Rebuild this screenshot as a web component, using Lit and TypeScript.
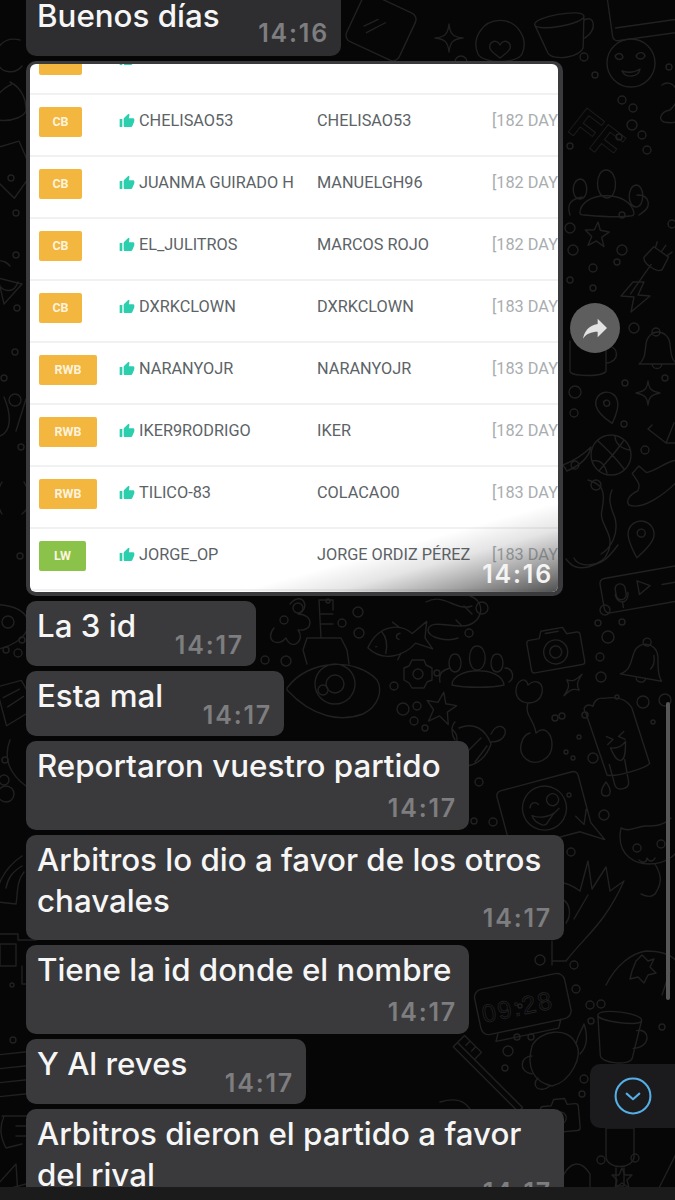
import { LitElement, html, css, svg } from 'lit';
import { customElement } from 'lit/decorators.js';

// wallpaper doodles: [x, y, rotation, path in local coords]
const DOODLES: [number, number, number, string][] = [
  // top right
  [382, 30, 25, 'M-24-28h44a7 7 0 0 1 7 7v38a7 7 0 0 1-7 7h-44a7 7 0 0 1-7-7v-38a7 7 0 0 1 7-7zM-8-8l-10 12M0-8l-13 17'],
  [449, 38, 0, 'M0-14C1-4 4-1 14 0 4 1 1 4 0 14-1 4-4 1-14 0-4-1-1-4 0-14z'],
  [500, 46, 0, 'M-22 8a24 24 0 1 1 44 0c-5 10-39 10-44 0zM0 12c-8-6-13-10-9-15 3-3 7-2 9 2 2-4 6-5 9-2 4 5-1 9-9 15z'],
  [562, 30, -10, 'M-26-10c0-8 50-8 50 0L18 20c-2 10-32 10-36 0zM-26-10c0 8 50 8 50 0M24-6c10-4 12 12-3 18'],
  [650, 15, -8, 'M-40-25V16a5 5 0 0 0 5 5h75M-36 8H40'],
  [631, 63, 0, 'M24 0A24 24 0 1 1-24 0 24 24 0 0 1 24 0zM-16-7c3-4 7-3 8 1-1 3-6 4-8-1zM5-7c3-5 8-4 9 0-2 4-7 4-9 0zM-9 8c6 2 12 2 18-2-1 8-14 10-18 2z'],
  [672, 105, 0, 'M-10-20c10-8 25 10 8 25-10 2-12 10-6 12 8 2 20 0 20-8'],
  // people group next to the table
  [606, 195, 0, 'M-26 18c0-22 50-24 54 0 0 2-2 3-4 3-14 2-34 0-46-1-2 0-4 0-4-2zM0-25c-11 0-12 27 1 28 12-1 11-28-1-28zM-26-16c-9 1-9 20 0 20 9 0 9-20 0-20zM30-10c-9 1-9 22 0 22 9 0 9-22 0-22zM-36 20c-4-12 2-16 12-18M33 20c6-4 12-8 8-16-3-4-6-4-10-4'],
  [597, 234, 5, 'M0-12L3-4 12-3 5 3 8 12 0 7-8 12-5 3-12-3-3-4z'],
  [652, 265, 35, 'M-9-16h18l2 14c-2 6-20 6-22 0zM-1 0V36M-7-16l-2-6M0-16v-8M7-16l2-6'],
  [636, 296, 0, 'M-3-14L-15 0-2 1-5 16 14 0 2-1 8-14z'],
  [657, 350, 0, 'M-18 14c6-4 6-12 7-20 2-16 22-16 24 0 1 8 1 16 7 20zM-1-14a4 4 0 1 1 0-8 4 4 0 0 1 0 8zM-5 14c1 6 9 6 10 0'],
  [590, 355, 0, 'M-20-14V16c0 6 34 6 36 0V-14M16-8c14-3 14 16 0 16'],
  [648, 393, 0, 'M0-12C1-4 3-2 12 0 3 2 1 4 0 12-1 4-3 2-12 0-3-2-1-4 0-12z'],
  // pin, basketball, tick and sneaker below the forward button
  [608, 408, -15, 'M0 16C-7 8-11 0-11-5a11 11 0 1 1 22 0c0 5-4 13-11 21zM0-8a3 3 0 1 1 0 6 3 3 0 0 1 0-6z'],
  [611, 455, 0, 'M-20 0A20 20 0 1 1 20 0 20 20 0 0 1-20 0zM-13-14C-4-6 4 2 13 14M13-15C6-4-4 6-12 16M-19 6C-10 4-6 10-4 18M4-19C4-12 10-6 19-5'],
  [660, 435, 0, 'M-12-6L6 8 14-12M-12-6L-8-10M6 8L16 8'],
  [650, 480, -12, 'M-16-10L-8-16-2-8C8-8 18-14 28-14M-16-10C-12 0-10 2-14 8-22 10-28 14-26 20-14 28 10 18 28 6'],
  [577, 455, 0, 'M-14 10C-4 6 6 0 14-8 12 2 4 10-10 16zM-6 10a4 4 0 1 1 0 .1'],
  // octopus arm and pin
  [598, 535, 0, 'M-10-55c14 4 18 10 14 30-4 14 14 24 6 42-6 16-30 16-34 6M14-45c-4 8-2 16 3 28 4 16-4 30-14 36M-32 24c6 8 12 10 22 8 14-4 18-6 30-22'],
  [640, 540, 10, 'M0 18C-8 8-13 0-13-6a13 13 0 1 1 26 0c0 6-5 14-13 24zM0-11a4 4 0 1 1 0 8 4 4 0 0 1 0-8z'],
  [642, 586, -10, 'M-36-14H36a5 5 0 0 1 5 5V16a5 5 0 0 1-5 5H-36a5 5 0 0 1-5-5V-9a5 5 0 0 1 5-5zM-22-6a5 5 0 0 1 5 5v6a5 5 0 0 1-10 0v-6a5 5 0 0 1 5-5zM-28 4c1 11 12 11 13 0M-22 12v6M-4-6L8 1-4 8zM20 2H34'],
  // middle band
  [395, 640, -8, 'M-28 4C-14-18 8-16 18-4L34-14 30 2 36 14 20 6C6 18-16 20-28 4zM-12-10c4 6 4 14 1 22M6-6c-4 0-6 4-2 6M-20 4h1M0-18L6-12M4 14L0 20'],
  [450, 620, 0, 'M-24-18C-6-28 6-8 22-14M20-24c18 6 12 30-8 30-16 0-32-6-34 4 0 8 20 12 30 8M14-14l8 8M6 0l6 6'],
  [476, 660, 0, 'M-24 25c0-18 50-20 52 0-12 3-40 3-52 0zM1-14c-10 0-10 24 0 24 11 0 11-24 0-24zM-21-6c-8 0-8 18 0 18 8 0 8-18 0-18zM21-6c-8 0-8 18 0 18 8 0 8-18 0-18zM-36 22c-2-10 4-12 10-14M33 22c6-4 4-14-4-14'],
  [418, 674, 0, 'M-6-14H6L8-9 14-6 14 6 9 8 6 14H-6L-9 9-14 6V-6L-9-8zM5 0A5 5 0 1 1-5 0 5 5 0 0 1 5 0z'],
  [441, 708, 10, 'M0-16L4-5 15-5 7 3 10 15 0 8-10 15-7 3-15-5-4-5z'],
  [555, 648, -10, 'M-24-12h10l3-7h22l3 7H24a3 3 0 0 1 3 3V18a3 3 0 0 1-3 3H-24a3 3 0 0 1-3-3V-9a3 3 0 0 1 3-3zM12 4A12 12 0 1 1-12 4 12 12 0 0 1 12 4zM6 4A6 6 0 1 1-6 4 6 6 0 0 1 6 4zM-7-16H6'],
  [645, 660, 10, 'M-22 18c10-6 8-14 10-24 2-12 20-14 24 0 2 8 2 18 8 24zM-1-14a4 4 0 1 1 0-8 4 4 0 0 1 0 8zM-6 18c1 6 9 6 10 0M8-6c2 6 2 10-1 14'],
  [573, 685, 40, 'M0-14C1-4 3-2 8 0 3 2 1 4 0 14-1 4-3 2-8 0-3-2-1-4 0-14z'],
  // submarine
  [333, 690, 0, 'M-46-2C-24-32 24-32 44-10c6 10 2 26-14 34-22 8-50 4-76-24zM-26-26l-4-14 4-12h34l6 12 2 14M-12-52L-14-90H0V-80M-12-76H0M-12-66H0M22-6A20 20 0 1 1-18-6 20 20 0 0 1 22-6zM11-6A9 9 0 1 1-7-6 9 9 0 0 1 11-6z'],
  [270, 620, 0, 'M20-16c12-14 22 4 8 10 16 0 16 18 0 16 8 10-6 22-12 8-8 10-22 2-12-10M14-4a4 4 0 1 1 0 8 4 4 0 0 1 0-8z'],
  [532, 725, 0, 'M-4-40c-2-10-12-4-12 6 0 8 6 12 14 12M-4-40c6-6 16-4 14 8-2 8-8 10-14 10M-4-22C-8-10 2-6 4 8M4 8c8-8 16 0 16 12 0 14-16 22-26 14-10-8-4-24 4-26'],
  [616, 745, -10, 'M-24-36c-4-8 4-10 8-6 2-6 8-8 12-6 14 0 22 4 26 14l8 58c-4 4-36 8-44 4zM-10 18L-8 40c2 6 14 6 14-2L6 16M-8-10L-2-6-8-2M10-12L4-8 10-4M-6 2c8 2 12 0 16-4-2 12-4 18-8 18-4 0-6-6-8-14z'],
  [475, 750, 0, 'M-16-22c14-6 26 0 32 16M16-6c-4 12-14 22-26 22-10 0-16-8-10-18 2-6 4-12-2-18M-10 4L6-12M0 12L12-4M16-16c6-12 16-8 14 0-2 6-8 8-14 8M-20-10c-4-6-4-14 0-18'],
  // wink chat bubble
  [545, 810, -15, 'M-38-30H36a5 5 0 0 1 5 5V24L50 44 28 30H-38a5 5 0 0 1-5-5V-25a5 5 0 0 1 5-5zM22-2A22 22 0 1 1-22-2 22 22 0 0 1 22-2zM4-8a6 6 0 1 1 12 0 6 6 0 0 1-12 0zM-14-6c2-5 7-5 9-1M-14 2C-6 8 6 8 14 2-2 10 0 16-6 14-12 10-14 6-14 2zM28 14L34 24M34 24L40 10'],
  [606, 790, 0, 'M0-8C-6 0-6 6 0 6 5 6 6 0 0-8z'],
  [645, 850, 0, 'M-24-22C-16-18-12-22 0-24 10-24 18-24 26-32M-24-22C-30 8-6 14 4 14 20 14 32 6 36-6M-8-6a4 4 0 1 1 0 8 4 4 0 0 1 0-8zM16-10a4 4 0 1 1 0 8 4 4 0 0 1 0-8zM-6 10c4 4 8 2 8-2 2 4 6 4 8 0M10 14c6 10 8 18 0 30-4 4-10 2-14 0'],
  // hand
  [596, 905, 0, 'M-44 56H-30C-10 30 8 20 28-24L14-14 10-38-4-16-8-44-16-14C-30-24-40-24-46-18M-8-10L-22 14M-34-6c8 4 10 16 4 24M-44 36V60'],
  [640, 945, 0, 'M-34 40C-24 20-8 8 6 6c20 0 30 6 34 16M-4 16l6-6 6 6 6-2-4 8 6 6-8 2-4 8-6-6-8 2 2-8zM30 26l-8 24'],
  // clock, 09:28
  [523, 1005, -12, 'M-38-24H38a8 8 0 0 1 8 8V14a8 8 0 0 1-8 8H-38a8 8 0 0 1-8-8V-16a8 8 0 0 1 8-8zM-30 22l-4 8H30l4-8'],
  [618, 1037, 5, 'M-22-20c0-8 46-6 44 2L16 20c-2 8-30 8-32 0zM-22-20c0 6 42 8 44 2M18-8c14-4 16 16-2 18'],
  [552, 1060, 0, 'M-20-14C-12-30 16-34 24-16 32-4 18 22 0 26-18 22-26 8-20-14zM24-16C26-26 30-30 32-36 36-24 36-14 28-6M-20-4C-32-4-34 12-20 14M-14 18C-22 26-12 34 -2 26'],
  [490, 1075, 45, 'M-46 0H46V6H-46zM-46 0V-10H-22V0M-38-10V-4M-30-10V-4'],
  [560, 1115, -5, 'M-16-10H-8L-5-16H6L8-10H16a3 3 0 0 1 3 3V14a3 3 0 0 1-3 3H-16a3 3 0 0 1-3-3V-7a3 3 0 0 1 3-3zM6 3A6 6 0 1 1-6 3 6 6 0 0 1 6 3z'],
  [620, 1150, 0, 'M-14-22H14V6C14 20-14 20-14 6zM-4 18V36H4V18'],
  [622, 1178, 0, 'M0-10L3-3 10-3 5 2 7 10 0 5-7 10-5 2-10-3-3-3z'],
  [670, 1170, 0, 'M-14 24L8-20M8-20V24M-14 24H8'],
  [590, 1180, 0, 'M-32 10C-24-20-10-22 0-6V10'],
  [470, 1110, 0, 'M-30-8c20-6 34 0 36 30V30'],
  // left strip
  [12, 70, 0, 'M8-30C-8-34-20-22-14-6-10 4 4 4 10-4M-2 12C10 18 14 30 14 38 16 46 0 52-14 50M0 14C-8 18-14 24-16 28'],
  [8, 175, -20, 'M-10-30L22-28 24 6-2 24-20-14z'],
  [8, 290, 0, 'M-14-12C-6 4 6 4 10-8M-10-12L14-6-4 14zM-14-26C-6-34 2-24 2-24'],
  [2, 415, 0, 'M-12 22c20 2 24-16 14-40M24-16L14 16'],
  [12, 500, 0, 'M-10 -18C-16-8-16 4-10 14M12-18C20-4 20 6 10 14'],
  [6, 628, 0, 'M-26-20C-4-28 20-20 22-6 24 8 4 24-26 22'],
  [10, 700, -15, 'M-10-16H16L24 14-10 24zM-6-4L12-8M-4 6L14 0'],
  [8, 780, 0, 'M2-40C-6-20 4-4 18 6M-10 14a8 8 0 1 1 16 0 8 8 0 0 1-16 0z'],
  [8, 880, 0, 'M-10 22C-14 8-4-12 14-24M-10 22L8 24C10 14 8 2 16-8M-2 8C0-2 4-8 14-14'],
  [10, 960, 0, 'M-10-16V6H6V-16zM-16-26H8V-20H26M12 6V24H26'],
  [10, 1075, 0, 'M-14-20L24-24M-14-6L24-10M-14 8L24 4M-14 22L24 18'],
  [12, 1130, 0, 'M-10-14H24M-8-14C-14 0-10 10-6 18L10 14M4-4H22M4 6H22'],
  [8, 1176, 0, 'M-10 8L8-12 10 20M-4 14L18 8'],
];

// little bubbles scattered between the doodles
const DOTS: [number, number, number][] = [
  [461, 62, 6], [584, 57, 4], [595, 75, 3], [669, 67, 3], [622, 100, 4], [633, 108, 4], [632, 125, 5],
  [619, 137, 3], [642, 135, 4], [647, 150, 4], [570, 146, 3], [570, 228, 5], [573, 250, 5], [622, 215, 3],
  [570, 280, 3], [622, 250, 5], [617, 262, 3], [593, 268, 4], [593, 288, 3], [634, 328, 5], [672, 224, 4],
  [625, 383, 3], [665, 378, 3], [575, 392, 6], [574, 413, 4], [624, 424, 3], [645, 450, 4], [596, 485, 5],
  [605, 610, 5], [598, 623, 3], [608, 637, 6], [622, 622, 3], [600, 657, 4], [601, 677, 5], [617, 697, 2],
  [643, 702, 6], [665, 700, 6], [653, 722, 2], [562, 716, 3], [585, 715, 3], [579, 737, 2], [566, 752, 2],
  [573, 758, 2], [593, 758, 5], [569, 795, 2], [555, 718, 3], [482, 608, 6], [469, 633, 4], [298, 608, 5],
  [328, 601, 2], [358, 612, 5], [342, 623, 4], [359, 633, 5], [437, 673, 3], [394, 686, 4], [403, 709, 6],
  [417, 706, 4], [414, 721, 4], [323, 690, 5], [265, 660, 4], [286, 661, 5], [425, 728, 3], [479, 782, 4],
  [493, 822, 4], [474, 821, 3], [604, 815, 5], [571, 852, 4], [540, 960, 5], [520, 1006, 2], [574, 965, 4],
  [576, 989, 4], [601, 1004, 4], [590, 1005, 4], [591, 1021, 3], [662, 1027, 3], [517, 1037, 3], [531, 1037, 3],
  [508, 1051, 5], [505, 1068, 3], [584, 1079, 4], [582, 1094, 3], [521, 1130, 3], [635, 1158, 4], [601, 1160, 4],
  [11, 178, 3], [16, 213, 3], [16, 255, 3], [17, 308, 3], [15, 352, 3], [4, 378, 3], [15, 400, 6], [21, 447, 3],
  [20, 556, 3], [8, 622, 6], [22, 640, 3], [6, 650, 3], [18, 653, 4], [5, 760, 3], [4, 780, 5], [12, 985, 2],
  [13, 1040, 3],
];

type Msg = { text: string; time: string; width: number; kind: 'inline' | 'stack' | 'wrap' };

const BEFORE: Msg[] = [{ text: 'Buenos días', time: '14:16', width: 315, kind: 'inline' }];

const AFTER: Msg[] = [
  { text: 'La 3 id', time: '14:17', width: 230, kind: 'inline' },
  { text: 'Esta mal', time: '14:17', width: 258, kind: 'inline' },
  { text: 'Reportaron vuestro partido', time: '14:17', width: 443, kind: 'stack' },
  { text: 'Arbitros lo dio a favor de los otros chavales', time: '14:17', width: 538, kind: 'wrap' },
  { text: 'Tiene la id donde el nombre', time: '14:17', width: 443, kind: 'stack' },
  { text: 'Y Al reves', time: '14:17', width: 280, kind: 'inline' },
  { text: 'Arbitros dieron el partido a favor del rival', time: '14:17', width: 538, kind: 'wrap' },
];

const ROWS = [
  { pos: 'CB', w: 43, user: 'CHELISAO53', name: 'CHELISAO53', days: '[182 DAYS]' },
  { pos: 'CB', w: 43, user: 'JUANMA GUIRADO H', name: 'MANUELGH96', days: '[182 DAYS]' },
  { pos: 'CB', w: 43, user: 'EL_JULITROS', name: 'MARCOS ROJO', days: '[182 DAYS]' },
  { pos: 'CB', w: 43, user: 'DXRKCLOWN', name: 'DXRKCLOWN', days: '[183 DAYS]' },
  { pos: 'RWB', w: 58, user: 'NARANYOJR', name: 'NARANYOJR', days: '[183 DAYS]' },
  { pos: 'RWB', w: 58, user: 'IKER9RODRIGO', name: 'IKER', days: '[182 DAYS]' },
  { pos: 'RWB', w: 58, user: 'TILICO-83', name: 'COLACAO0', days: '[183 DAYS]' },
  { pos: 'LW', w: 47, user: 'JORGE_OP', name: 'JORGE ORDIZ PÉREZ', days: '[183 DAYS]' },
];

const THUMB = html`<svg class="thumb" viewBox="0 0 24 24"><path d="M1 21h4V9H1v12zm22-11c0-1.100-.9-2-2-2h-6.310l.95-4.570.03-.320c0-.41-.17-.79-.44-1.060L14.170 1 7.590 7.590C7.220 7.950 7 8.450 7 9v10c0 1.100.9 2 2 2h9c.83 0 1.540-.5 1.840-1.220l3.020-7.050c.09-.23.14-.47.14-.73v-2z"/></svg>`;

@customElement('app-root')
export class AppRoot extends LitElement {
  static styles = css`
    :host {
      display: block;
      font-family: Inter, 'Liberation Sans', sans-serif;
    }

    .page {
      position: relative;
      height: 1200px;
      overflow: hidden;
      background: #060607;
    }

    .wallpaper {
      position: absolute;
      inset: 0;
      width: 675px;
      height: 1200px;
    }

    .wallpaper path,
    .wallpaper circle {
      fill: none;
      stroke: #212122;
      stroke-width: 1.4;
      stroke-linejoin: round;
      stroke-linecap: round;
    }

    .wallpaper text {
      fill: none;
      stroke: #212122;
      stroke-width: 0.8;
      font-family: 'Liberation Sans', sans-serif;
    }

    .list {
      position: relative;
      display: flex;
      flex-direction: column;
      align-items: flex-start;
      gap: 5px;
      margin-top: -9px;
      padding-left: 26px;
    }

    .bubble {
      box-sizing: border-box;
      background: #3a3a3c;
      border-radius: 10px;
      color: #f6f6f6;
      font-size: 31.300px;
      font-weight: 500;
      line-height: 41px;
      padding: 5px 13px 6px 11px;
    }

    .bubble.inline {
      display: flex;
      justify-content: space-between;
      padding: 5px 13px 5px 11px;
    }

    .bubble.dim {
      background: #2e2e30;
      padding-bottom: 7px;
    }

    .time {
      color: #7e7e80;
      font-size: 25px;
      font-weight: 600;
      line-height: 32px;
      letter-spacing: 1.800px;
      text-align: right;
    }

    .inline .time {
      margin: 23px -1px 0 0;
    }

    .dim .time {
      margin-top: 21px;
    }

    .stack .time {
      margin: 5px -1px 0 0;
    }

    .wrap .time {
      margin: -20px -1px 0 0;
    }

    .shot {
      position: relative;
      box-sizing: border-box;
      width: 537px;
      height: 535px;
      padding: 3px 5px 4px 4px;
      background: #3a3a3c;
      border-radius: 10px;
    }

    .sheet {
      position: relative;
      height: 528px;
      overflow: hidden;
      background: #fff;
      border-radius: 6px;
    }

    .rows {
      margin-top: -31px;
    }

    .row {
      display: grid;
      grid-template-columns: 80px 198px 175px 1fr;
      box-sizing: border-box;
      height: 62px;
      padding: 12px 0 0 9px;
      border-bottom: 2px solid #f0f1f2;
      font-family: Roboto, sans-serif;
      font-size: 16.300px;
      line-height: 27px;
      color: #5c6367;
      white-space: nowrap;
    }

    .badge {
      height: 30px;
      border-radius: 2px;
      background: #f3b63e;
      color: #fdf3dd;
      font-size: 12.500px;
      font-weight: 700;
      line-height: 30px;
      text-align: center;
    }

    .badge.LW {
      background: #8bc34a;
    }

    .user {
      display: flex;
      align-items: center;
      gap: 4px;
      height: 27px;
    }

    .thumb {
      width: 16px;
      height: 16px;
      fill: #2bcfae;
      flex: none;
    }

    .days {
      color: #a9adb0;
      overflow: hidden;
    }

    .shade {
      position: absolute;
      right: 0;
      bottom: 0;
      width: 320px;
      height: 90px;
      background: linear-gradient(
        to bottom right,
        rgba(70, 70, 70, 0) 50%,
        rgba(70, 70, 70, 0.14) 65%,
        rgba(70, 70, 70, 0.5) 82%,
        rgba(70, 70, 70, 0.95) 100%
      );
    }

    .shot-time {
      position: absolute;
      right: 5px;
      bottom: 2px;
      color: #f4f4f4;
      font-size: 25px;
      font-weight: 600;
      line-height: 32px;
      letter-spacing: 1.800px;
    }

    .forward {
      position: absolute;
      left: 570px;
      top: 303px;
      width: 50px;
      height: 50px;
      display: flex;
      align-items: center;
      justify-content: center;
      border-radius: 50%;
      background: #5e5e5f;
    }

    .forward svg {
      width: 32px;
      height: 32px;
      fill: #e2e2e2;
    }

    .scrollbar {
      position: absolute;
      left: 666px;
      top: 702px;
      width: 4px;
      height: 298px;
      border-radius: 2px;
      background: #565657;
    }

    .down {
      position: absolute;
      left: 590px;
      top: 1064px;
      width: 85px;
      height: 64px;
      display: flex;
      align-items: center;
      padding-left: 24px;
      box-sizing: border-box;
      border-radius: 10px 0 0 10px;
      background: #1b1b1d;
    }

    .down svg {
      width: 38px;
      height: 38px;
      fill: none;
      stroke: #55aee6;
      stroke-width: 1.300;
      stroke-linecap: round;
      stroke-linejoin: round;
    }

    .bottom {
      position: absolute;
      left: 0;
      right: 0;
      top: 1187px;
      height: 13px;
      background: #1b1b1c;
    }
  `;

  private renderMsg(m: Msg, dim = false) {
    return html`<div class="bubble ${m.kind} ${dim ? 'dim' : ''}" style="width:${m.width}px">
      <div>${m.text}</div>
      <div class="time">${m.time}</div>
    </div>`;
  }

  private renderRow(r: (typeof ROWS)[number]) {
    return html`<div class="row">
      <div class="badge ${r.pos}" style="width:${r.w}px">${r.pos}</div>
      <div class="user">${THUMB}${r.user}</div>
      <div>${r.name}</div>
      <div class="days">${r.days}</div>
    </div>`;
  }

  render() {
    return html`
      <div class="page">
        <svg class="wallpaper" viewBox="0 0 675 1200">
          ${DOODLES.map(([x, y, r, d]) => svg`<path transform="translate(${x} ${y}) rotate(${r})" d=${d}></path>`)}
          ${DOTS.map(([x, y, r]) => svg`<circle cx=${x} cy=${y} r=${r}></circle>`)}
          <text transform="translate(484 1023) rotate(-12)" font-size="25" letter-spacing="2">09:28</text>
          <text transform="translate(566 130) rotate(38)" font-size="44" font-weight="700">FF</text>
        </svg>
        <div class="list">
          ${BEFORE.map((m) => this.renderMsg(m, true))}
          <div class="shot">
            <div class="sheet">
              <div class="rows">
                ${this.renderRow({ pos: 'CB', w: 43, user: '', name: '', days: '' })}
                ${ROWS.map((r) => this.renderRow(r))}
              </div>
              <div class="shade"></div>
              <div class="shot-time">14:16</div>
            </div>
          </div>
          ${AFTER.map((m) => this.renderMsg(m))}
        </div>
        <div class="forward">
          <svg viewBox="0 0 24 24"><path d="M14 5l7 7-7 7v-4.100c-5 0-8.500 1.600-11 5.100 1-5 4-10 11-11z"/></svg>
        </div>
        <div class="scrollbar"></div>
        <div class="down">
          <svg viewBox="0 0 24 24"><circle cx="12" cy="12" r="11"/><path d="M8 10.500l4 3.500 4-3.500"/></svg>
        </div>
        <div class="bottom"></div>
      </div>
    `;
  }
}

declare global {
  interface HTMLElementTagNameMap {
    'app-root': AppRoot;
  }
}
